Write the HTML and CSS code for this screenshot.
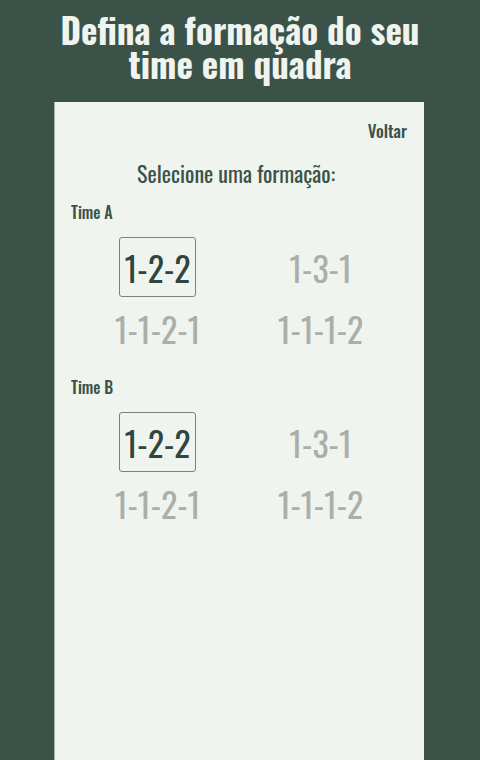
FILE: index.html
```html
<!DOCTYPE html>
<html lang="pt-BR">
<head>
<meta charset="utf-8">
<title>Formação</title>
<link rel="stylesheet" href="styles.css">
</head>
<body>
<h1 class="title">Defina a formação do seu<br>time em quadra</h1>
<main class="card">
  <div class="topbar"><a class="back" href="#">Voltar</a></div>
  <h2 class="subtitle">Selecione uma formação:</h2>
  <section class="team">
    <h3 class="team-name">Time A</h3>
    <div class="options">
      <button class="option selected">1-2-2</button>
      <button class="option">1-3-1</button>
      <button class="option">1-1-2-1</button>
      <button class="option">1-1-1-2</button>
    </div>
  </section>
  <section class="team">
    <h3 class="team-name">Time B</h3>
    <div class="options">
      <button class="option selected">1-2-2</button>
      <button class="option">1-3-1</button>
      <button class="option">1-1-2-1</button>
      <button class="option">1-1-1-2</button>
    </div>
  </section>
</main>
</body>
</html>
```
FILE: styles.css
```css
html, body {
  margin: 0;
  padding: 0;
  height: 100%;
}
body {
  background: #3b5249;
  font-family: "Oswald", "Roboto", sans-serif;
  display: flex;
  flex-direction: column;
  align-items: center;
  overflow: hidden;
}
.title {
  margin: 12px 0 22px;
  font-size: 35px;
  line-height: 34px;
  font-weight: 700;
  color: #f0f4ee;
  text-align: center;
}
.card {
  flex: 1;
  width: 370px;
  margin-right: 2px;
  box-sizing: border-box;
  background: #f0f4ee;
  border-left: 1px solid #a6b0ab;
  padding: 19px 17px 0 16px;
  color: #3b5249;
}
.topbar {
  display: flex;
  justify-content: flex-end;
}
.back {
  font-size: 17px;
  line-height: 20px;
  font-weight: 500;
  color: #3b5249;
  text-decoration: none;
}
.subtitle {
  margin: 17px 0 14px;
  padding-right: 6px;
  font-size: 22px;
  line-height: 30px;
  font-weight: 400;
  text-align: center;
}
.team-name {
  margin: 0 0 15px;
  font-size: 16px;
  line-height: 20px;
  font-weight: 500;
}
.team + .team .team-name {
  margin-top: 19px;
}
.options {
  display: grid;
  grid-template-columns: repeat(2, 163px);
  grid-auto-rows: 60px;
  row-gap: 1px;
  justify-content: center;
  justify-items: center;
  align-items: center;
}
.option {
  font-family: inherit;
  background: none;
  border: 1px solid transparent;
  border-radius: 3px;
  padding: 0;
  height: 60px;
  font-size: 34px;
  font-weight: 400;
  color: #a9afab;
  cursor: pointer;
}
.option.selected {
  width: 77px;
  border-color: #7b827e;
  color: #2f4640;
}
```
